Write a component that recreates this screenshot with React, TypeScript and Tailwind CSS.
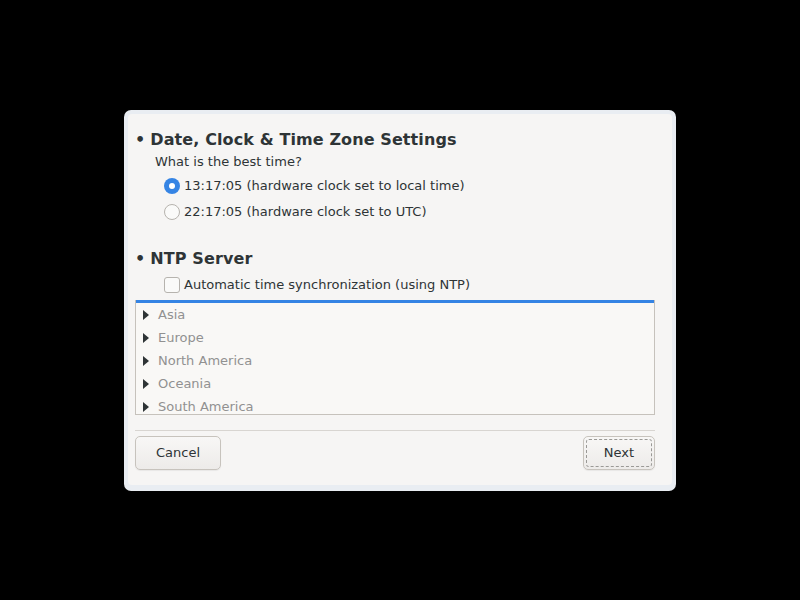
import { useState } from "react";

const regions = ["Asia", "Europe", "North America", "Oceania", "South America"];

const Radio = ({ checked }: { checked: boolean }) => (
  <span
    className={
      checked
        ? "flex h-4 w-4 items-center justify-center rounded-full bg-[#3584e4]"
        : "h-4 w-4 rounded-full border border-[#b6b3ae] bg-[#fafaf9]"
    }
  >
    {checked && <span className="h-[6px] w-[6px] rounded-full bg-white" />}
  </span>
);

const App = () => {
  const [choice, setChoice] = useState(0);
  const [ntp, setNtp] = useState(false);

  return (
    <div
      className="flex h-[600px] w-[800px] items-start justify-center bg-black pt-[110px] text-[13px] text-[#2e3436]"
      style={{ fontFamily: '"DejaVu Sans", sans-serif' }}
    >
      <div className="w-[552px] rounded-[7px] bg-[#e9edf2] px-[4px] pb-[6px] pt-[4px]">
        <div className="flex flex-col rounded-[4px] bg-[#f6f5f4] pb-[15px] pl-[7px] pr-[17px] pt-[16px]">
          <h2 className="flex items-center gap-[5px] text-[16px] font-bold leading-[20px] tracking-[0.1px]">
            <span>•</span>
            <span>Date, Clock &amp; Time Zone Settings</span>
          </h2>
          <p className="mt-[3px] pl-[20px] leading-[17px]">What is the best time?</p>
          <div className="mt-[8px] flex flex-col gap-[10px] pl-[29px]">
            {["13:17:05 (hardware clock set to local time)", "22:17:05 (hardware clock set to UTC)"].map((label, i) => (
              <button
                key={label}
                className="flex items-center gap-[4px] leading-[16px]"
                onClick={() => setChoice(i)}
              >
                <Radio checked={choice === i} />
                <span>{label}</span>
              </button>
            ))}
          </div>

          <h2 className="mt-[29px] flex items-center gap-[5px] text-[16px] font-bold leading-[20px] tracking-[0.1px]">
            <span>•</span>
            <span>NTP Server</span>
          </h2>
          <button
            className="ml-[29px] mt-[8px] flex items-center gap-[4px] leading-[16px]"
            onClick={() => setNtp(!ntp)}
          >
            <span className="h-4 w-4 rounded-[3px] border border-[#b6b3ae] bg-[#fafaf9]" />
            <span>Automatic time synchronization (using NTP)</span>
          </button>

          <div className="mt-[7px] h-[115px] overflow-hidden border border-t-0 border-[#c6c2bc] bg-[#f9f8f6]">
            <div className="h-[3px] bg-[#3584e4]" />
            <ul className="flex flex-col">
              {regions.map((r) => (
                <li key={r} className="flex h-[23px] items-center gap-[8px] pl-[7px] text-[#919191]">
                  <svg width="7" height="10" viewBox="0 0 7 10">
                    <path d="M0 0 L6 5 L0 10 Z" fill="#2e3436" />
                  </svg>
                  <span>{r}</span>
                </li>
              ))}
            </ul>
          </div>

          <div className="mt-[15px] border-t border-[#d8d5d1]" />
          <div className="mt-[5px] flex justify-between">
            <button className="h-[34px] w-[86px] rounded-[5px] border border-[#c7c3bd] bg-gradient-to-b from-[#f8f7f6] to-[#edebe9] shadow-[0_1px_1px_rgba(0,0,0,0.06)]">
              Cancel
            </button>
            <button className="h-[34px] w-[72px] rounded-[5px] border border-[#c7c3bd] bg-gradient-to-b from-[#f8f7f6] to-[#edebe9] p-[2px] shadow-[0_1px_1px_rgba(0,0,0,0.06)]">
              <span className="flex h-full w-full items-center justify-center rounded-[3px] border border-dashed border-[#9a9996]">
                Next
              </span>
            </button>
          </div>
        </div>
      </div>
    </div>
  );
};

export default App;
